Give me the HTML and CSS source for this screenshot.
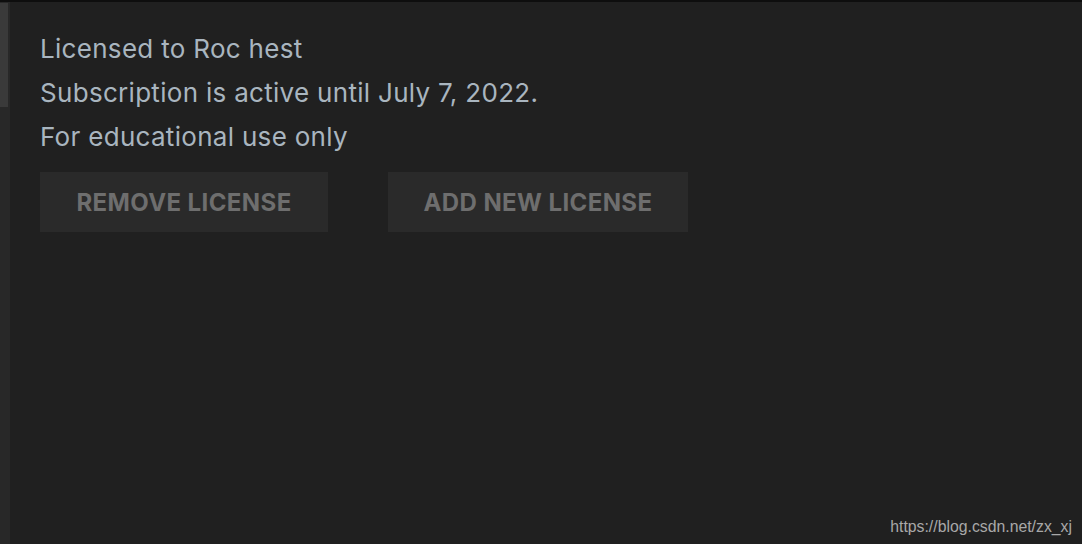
FILE: index.html
```html
<!DOCTYPE html>
<html>
<head>
<meta charset="utf-8">
<link rel="stylesheet" href="styles.css">
</head>
<body>
<div class="frame">
  <div class="gutter"><div class="thumb"></div></div>
  <main class="content">
    <div class="info">
      <p class="line">Licensed to Roc hest</p>
      <p class="line">Subscription is active until July 7, 2022.</p>
      <p class="line">For educational use only</p>
    </div>
    <div class="actions">
      <button class="btn btn-remove">REMOVE LICENSE</button>
      <button class="btn btn-add">ADD NEW LICENSE</button>
    </div>
  </main>
</div>
<span class="watermark">https://blog.csdn.net/zx_xj</span>
</body>
</html>
```
FILE: styles.css
```css
html, body {
  margin: 0;
  padding: 0;
  height: 100%;
  background: #202020;
  overflow: hidden;
}
body {
  position: relative;
  font-family: Inter, "Noto Sans", sans-serif;
}
.frame {
  display: flex;
  height: 100%;
  border-top: 2px solid #0e0e0e;
  box-sizing: border-box;
}
.gutter {
  width: 10px;
  flex: none;
  background: #282828;
  padding-top: 1px;
}
.thumb {
  width: 8px;
  height: 104px;
  background: #3a3a3a;
}
.content {
  flex: 1;
  padding: 25px 0 0 30px;
}
.info {
  display: flex;
  flex-direction: column;
}
.line {
  margin: 0;
  height: 44px;
  line-height: 44px;
  font-size: 26px;
  color: #a9b5bf;
  letter-spacing: 0.3px;
}
.actions {
  display: flex;
  gap: 60px;
  margin-top: 13px;
}
.btn {
  height: 60px;
  border: none;
  background: #2a2a2a;
  color: #6e6e6e;
  font-family: Inter, "Noto Sans", sans-serif;
  font-weight: 700;
  font-size: 24px;
  letter-spacing: 0.4px;
  padding: 0;
}
.btn-remove { width: 288px; }
.btn-add { width: 300px; }
.watermark {
  position: absolute;
  right: 10px;
  bottom: 8px;
  font-family: "Liberation Sans", Arial, sans-serif;
  font-size: 15.8px;
  color: #a8a8a8;
}
```
